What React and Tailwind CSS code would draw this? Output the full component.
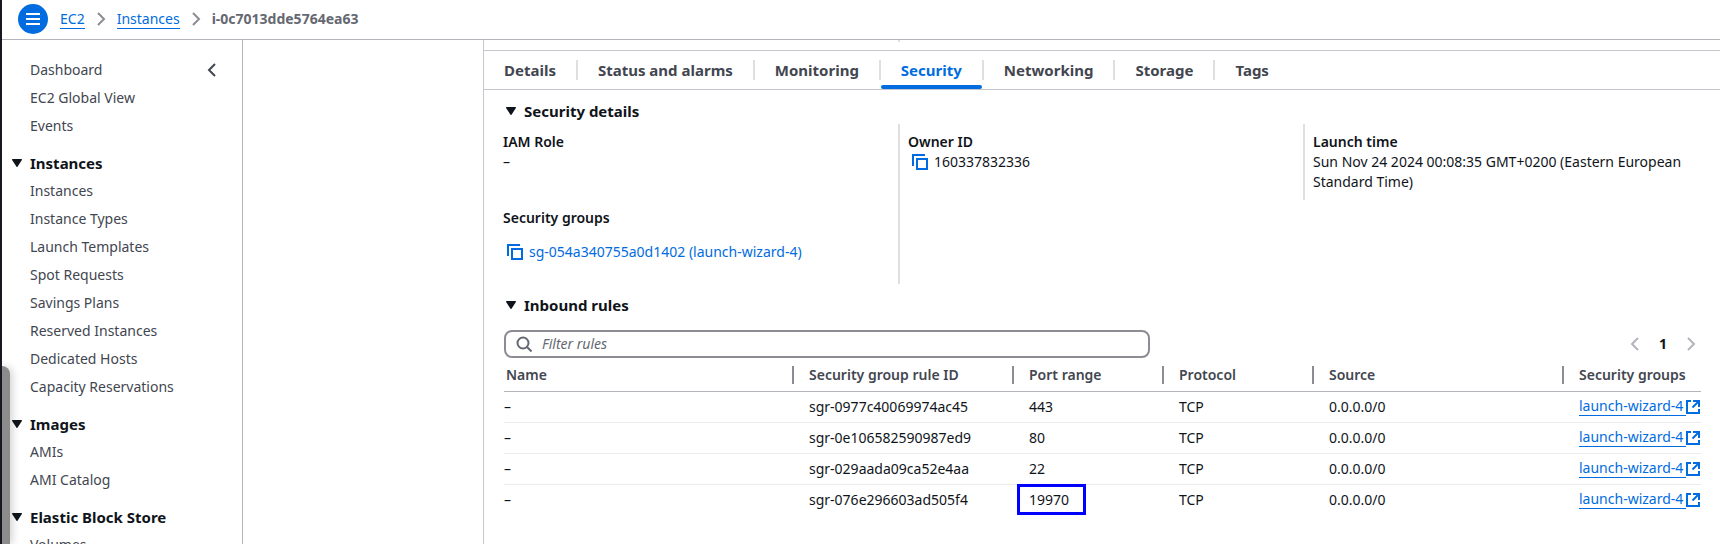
const sections = [
  {
    title: null,
    items: ["Dashboard", "EC2 Global View", "Events"],
  },
  {
    title: "Instances",
    items: [
      "Instances",
      "Instance Types",
      "Launch Templates",
      "Spot Requests",
      "Savings Plans",
      "Reserved Instances",
      "Dedicated Hosts",
      "Capacity Reservations",
    ],
  },
  { title: "Images", items: ["AMIs", "AMI Catalog"] },
  { title: "Elastic Block Store", items: ["Volumes"] },
];

const tabs = ["Details", "Status and alarms", "Monitoring", "Security", "Networking", "Storage", "Tags"];

const columns = [
  { label: "Name", width: "w-[290px]" },
  { label: "Security group rule ID", width: "w-[220px]" },
  { label: "Port range", width: "w-[150px]" },
  { label: "Protocol", width: "w-[150px]" },
  { label: "Source", width: "w-[250px]" },
  { label: "Security groups", width: "" },
];

const rules = [
  { id: "sgr-0977c40069974ac45", port: "443" },
  { id: "sgr-0e106582590987ed9", port: "80" },
  { id: "sgr-029aada09ca52e4aa", port: "22" },
  { id: "sgr-076e296603ad505f4", port: "19970", marked: true },
];

function Chevron({ direction = "right", className = "" }) {
  return (
    <svg viewBox="0 0 16 16" fill="none" stroke="currentColor" strokeWidth="2" className={`size-4 shrink-0 ${className}`} aria-hidden="true">
      <path d={direction === "right" ? "M5 2l6 6-6 6" : "M11 2L5 8l6 6"} />
    </svg>
  );
}

function Caret() {
  return (
    <svg viewBox="0 0 10 8" className="h-2 w-2.5 shrink-0 fill-[#0f141a]" aria-hidden="true">
      <path d="M.6 0h8.800c.5 0 .8.6.5 1L5.500 7.700c-.3.400-.7.400-1 0L.1 1C-.2.6.1 0 .6 0z" />
    </svg>
  );
}

function CopyButton({ label }) {
  return (
    <button type="button" aria-label={label} className="flex size-4 shrink-0 text-[#006ce0]">
      <svg viewBox="0 0 16 16" fill="none" stroke="currentColor" strokeWidth="2" className="size-4" aria-hidden="true">
        <path d="M15 5H5v10h10V5Z" />
        <path d="M13 1H1v11" />
      </svg>
    </button>
  );
}

function ExternalIcon() {
  return (
    <svg viewBox="0 0 14 14" fill="none" stroke="currentColor" strokeWidth="2" className="size-3.5 shrink-0" aria-hidden="true">
      <path d="M5 1H1v12h12V9" />
      <path d="M7 1h6v6" />
      <path d="M13 1L6.500 7.500" />
    </svg>
  );
}

function SectionHeading({ children }) {
  return (
    <h2 className="pt-[9px] pb-px">
      <button type="button" aria-expanded="true" className="flex items-center gap-2 pl-[22px] text-[15px] leading-6 font-bold">
        <Caret />
        {children}
      </button>
    </h2>
  );
}

function Sidebar() {
  return (
    <nav aria-label="EC2" className="relative w-[241px] shrink-0 overflow-hidden border-r border-[#b4b4bb] pt-4">
      <div className="absolute top-[326px] bottom-0 left-0 w-2 rounded-tr-lg bg-[#8c8c8c] shadow-[2px_0_8px_rgba(0,0,0,0.2)]" />
      {sections.map((section, index) => (
        <div key={index} className={index > 0 ? "mt-[9px]" : ""}>
          {section.title && (
            <button type="button" aria-expanded="true" className="relative flex h-7 items-center gap-2 pl-2.5 text-[15px] font-bold">
              <Caret />
              {section.title}
            </button>
          )}
          <ul>
            {section.items.map((item, row) => (
              <li key={item} className="flex h-7 items-center justify-between pr-[22px] pl-7 text-[#424650]">
                <a href="#">{item}</a>
                {index === 0 && row === 0 && (
                  <button type="button" aria-label="Close navigation">
                    <Chevron direction="left" />
                  </button>
                )}
              </li>
            ))}
          </ul>
        </div>
      ))}
    </nav>
  );
}

function Header() {
  return (
    <header className="flex h-10 shrink-0 items-center border-b border-[#b4b4bb] pb-px pl-4">
      <button type="button" aria-label="Open navigation" className="flex size-[30px] items-center justify-center rounded-full bg-[#006ce0] text-white">
        <svg viewBox="0 0 14 12" fill="none" stroke="currentColor" strokeWidth="2" className="h-3 w-3.5" aria-hidden="true">
          <path d="M0 1h14M0 6h14M0 11h14" />
        </svg>
      </button>
      <nav aria-label="Breadcrumbs" className="ml-3">
        <ol className="flex items-center gap-2">
          <li><a href="#" className="border-b border-[#006ce0] text-[#006ce0]">EC2</a></li>
          <li><Chevron className="text-[#8c8c94]" /></li>
          <li><a href="#" className="border-b border-[#006ce0] text-[#006ce0]">Instances</a></li>
          <li><Chevron className="text-[#8c8c94]" /></li>
          <li className="font-bold text-[#656871]">i-0c7013dde5764ea63</li>
        </ol>
      </nav>
    </header>
  );
}

function Tabs() {
  return (
    <div role="tablist" className="flex h-10 items-center border-y border-[#c6c6cd]">
      {tabs.map((tab, index) => {
        const active = tab === "Security";
        return (
          <div key={tab} className="flex h-full items-center">
            {index > 0 && <span className="h-5 w-0.5 bg-[#dedee3]" />}
            <button
              type="button"
              role="tab"
              aria-selected={active}
              className={`relative h-full px-5 text-[15px] font-bold ${active ? "text-[#006ce0]" : "text-[#424650]"}`}
            >
              {tab}
              {active && <span className="absolute inset-x-0 bottom-0 h-1 rounded-full bg-[#006ce0]" />}
            </button>
          </div>
        );
      })}
    </div>
  );
}

function Details() {
  return (
    <dl className="mr-2.5 ml-[11px] grid grid-cols-3">
      <div className="border-r-2 border-[#dedee3] p-2">
        <dt className="font-semibold">IAM Role</dt>
        <dd>–</dd>
      </div>
      <div className="border-r-2 border-[#dedee3] p-2">
        <dt className="font-semibold">Owner ID</dt>
        <dd className="flex items-center gap-1.5 pl-1">
          <CopyButton label="Copy owner ID" />
          160337832336
        </dd>
      </div>
      <div className="p-2">
        <dt className="font-semibold">Launch time</dt>
        <dd>Sun Nov 24 2024 00:08:35 GMT+0200 (Eastern European Standard Time)</dd>
      </div>
      <div className="border-r-2 border-[#dedee3] px-2 pt-2 pb-[22px]">
        <dt className="font-semibold">Security groups</dt>
        <dd className="mt-3.5 flex items-center gap-1.5 pl-1">
          <CopyButton label="Copy security group" />
          <a href="#" className="text-[#006ce0]">sg-054a340755a0d1402 (launch-wizard-4)</a>
        </dd>
      </div>
    </dl>
  );
}

function RulesTable() {
  return (
    <table className="w-full table-fixed border-collapse text-left">
      <thead>
        <tr className="border-b border-[#b4b4bb] text-[#424650]">
          {columns.map((column, index) => (
            <th key={column.label} scope="col" className={`${column.width} h-[33px] p-0 pt-0.5 font-semibold`}>
              <div className={`flex h-[18px] items-center ${index === 0 ? "pl-0.5" : "pl-[15px]"} ${index < columns.length - 1 ? "border-r-2 border-[#8c8c94]" : ""}`}>
                {column.label}
              </div>
            </th>
          ))}
        </tr>
      </thead>
      <tbody>
        {rules.map((rule) => (
          <tr key={rule.id} className="h-[31px] border-b border-[#ebebf0] last:border-b-0">
            <td className="p-0">–</td>
            <td className="p-0 pl-[15px]">{rule.id}</td>
            <td className="p-0 pl-[15px]">
              <span className="relative">
                {rule.port}
                {rule.marked && <span className="absolute -inset-x-3 -inset-y-1.5 w-[69px] border-3 border-[#0000ff]" />}
              </span>
            </td>
            <td className="p-0 pl-[15px]">TCP</td>
            <td className="p-0 pl-[15px]">0.0.0.0/0</td>
            <td className="p-0 pl-[15px]">
              <a href="#" className="flex items-center whitespace-nowrap text-[#006ce0]">
                <span className="border-b border-[#006ce0] pr-[3px] leading-[18px]">launch-wizard-4</span>
                <ExternalIcon />
              </a>
            </td>
          </tr>
        ))}
      </tbody>
    </table>
  );
}

export default function App() {
  return (
    <div className="flex h-screen flex-col overflow-hidden border-l-2 border-[#16191f] bg-white font-['Noto_Sans',sans-serif] text-sm leading-5 text-[#0f141a]">
      <Header />
      <div className="flex min-h-0 flex-1">
        <Sidebar />
        <div className="w-60 shrink-0" />
        <main className="min-w-0 flex-1 overflow-hidden border-l border-[#c6c6cd]">
          <div className="mr-2.5 ml-[11px] grid h-2.5 grid-cols-3">
            <span className="h-0.5 border-r-2 border-[#dedee3]" />
          </div>
          <Tabs />
          <SectionHeading>Security details</SectionHeading>
          <Details />
          <SectionHeading>Inbound rules</SectionHeading>
          <div className="mr-[19px] ml-5">
            <div className="mt-3 flex items-center justify-between">
              <label className="flex h-7 w-[54%] items-center gap-2.5 rounded-lg border-2 border-[#8c8c94] pl-2.5">
                <svg viewBox="0 0 16 16" fill="none" stroke="#656871" strokeWidth="2" className="size-4 shrink-0" aria-hidden="true">
                  <circle cx="7" cy="7" r="5.500" />
                  <path d="M11 11l4.500 4.500" />
                </svg>
                <input type="text" aria-label="Filter rules" placeholder="Filter rules" className="min-w-0 flex-1 bg-transparent outline-none placeholder:text-[#656871] placeholder:italic" />
              </label>
              <div className="flex items-center gap-4 pr-0.5 font-bold">
                <button type="button" aria-label="Previous page" className="text-[#b4b4bb]">
                  <Chevron direction="left" />
                </button>
                <button type="button" aria-current="page">1</button>
                <button type="button" aria-label="Next page" className="text-[#b4b4bb]">
                  <Chevron />
                </button>
              </div>
            </div>
            <RulesTable />
          </div>
        </main>
      </div>
    </div>
  );
}
